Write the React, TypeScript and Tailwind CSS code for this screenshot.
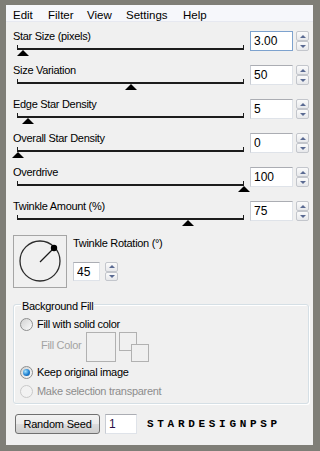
import clsx from "clsx";

const sliders = [
  { label: "Star Size (pixels)", value: "3.00", pos: 5, focused: true },
  { label: "Size Variation", value: "50", pos: 113 },
  { label: "Edge Star Density", value: "5", pos: 10 },
  { label: "Overall Star Density", value: "0", pos: 0 },
  { label: "Overdrive", value: "100", pos: 226 },
  { label: "Twinkle Amount (%)", value: "75", pos: 170 },
];

const menu = [
  { name: "Edit", w: "w-[35px]" },
  { name: "Filter", w: "w-[39px]" },
  { name: "View", w: "w-[39px]" },
  { name: "Settings", w: "w-[57px]" },
  { name: "Help", w: "w-[40px]" },
];

const label = "text-[11px] leading-[13px] tracking-[-0.3px] whitespace-nowrap";

function SpinBtn({ up }: { up?: boolean }) {
  return (
    <div className="flex flex-1 items-center justify-center rounded-[2px] border border-[#c3c6cc] bg-gradient-to-b from-[#fbfbfb] to-[#e7e8eb]">
      {up ? (
        <span className="h-0 w-0 border-x-[3px] border-b-[3px] border-x-transparent border-b-[#5a6a92]" />
      ) : (
        <span className="h-0 w-0 border-x-[3px] border-t-[3px] border-x-transparent border-t-[#5a6a92]" />
      )}
    </div>
  );
}

function Spinner({ className }: { className: string }) {
  return (
    <div className={clsx("flex w-[13px] flex-col", className)}>
      <SpinBtn up />
      <SpinBtn />
    </div>
  );
}

function Radio({ checked, disabled }: { checked?: boolean; disabled?: boolean }) {
  return (
    <span
      className={clsx(
        "flex h-[13px] w-[13px] shrink-0 items-center justify-center rounded-full border",
        disabled
          ? "border-[#c9c9c9] bg-[#f2f2f2]"
          : "border-[#8e8f8f] bg-gradient-to-br from-[#d2d2d2] to-[#fbfbfb]"
      )}
    >
      {checked && (
        <span className="h-[7px] w-[7px] rounded-full bg-[radial-gradient(circle_at_35%_35%,#a6e4ff,#1d7fd0_55%,#0b4c91)]" />
      )}
    </span>
  );
}

export default function App() {
  return (
    <div className="h-[451px] w-[320px] bg-[#7f7e77] pb-[6px] pl-[6px] pr-[7px] pt-[5px] font-['Liberation_Sans',Arial,sans-serif] text-black">
      <div className="flex h-full flex-col bg-[#f0f0f0]">
        {/* menu bar */}
        <div className="flex h-[17px] border-b border-[#e6e8f0] bg-[#f6f7fb] pl-[7px] pt-[3px] text-[11.5px] leading-[14px]">
          {menu.map((m) => (
            <span key={m.name} className={m.w}>
              {m.name}
            </span>
          ))}
        </div>

        {/* sliders */}
        <div className="mt-[8px] flex flex-col">
          {sliders.map((s) => (
            <div key={s.label} className="flex h-[34px]">
              <div className="w-[238px] pl-[7px]">
                <div className={clsx("h-[13px]", label)}>{s.label}</div>
                <div className="relative ml-[4px] mt-[2px] h-[5px] w-[227px] border-x border-b-2 border-[#1c1c1c]">
                  <span
                    className="absolute top-[5px] h-0 w-0 border-x-[6px] border-b-[6px] border-x-transparent border-b-black"
                    style={{ left: s.pos - 6 }}
                  />
                </div>
              </div>
              <input
                readOnly
                value={s.value}
                className={clsx(
                  "ml-[6px] mt-[1px] h-[20px] w-[43px] border bg-white px-[3px] text-[12px] leading-[18px] outline-none",
                  s.focused
                    ? "border-[#7da2ce]"
                    : "border-[#dfe3e9] border-t-[#abadb3] border-l-[#c8ccd3]"
                )}
              />
              <Spinner className="ml-[3px] mt-[1px] h-[20px]" />
            </div>
          ))}
        </div>

        {/* twinkle rotation */}
        <div className="mt-[1px] flex pl-[7px]">
          <div className="h-[53px] w-[54px] border border-[#a5a5a5]">
            <svg width="52" height="51" viewBox="0 0 52 51">
              <circle cx="26" cy="25" r="20" fill="none" stroke="#2b2b2b" strokeWidth="1.3" />
              <line x1="26" y1="26" x2="40" y2="12" stroke="#1a1a1a" strokeWidth="1.3" />
              <circle cx="40" cy="12" r="3.2" fill="#000" />
            </svg>
          </div>
          <div className="ml-[6px] pt-[2px]">
            <div className={label}>Twinkle Rotation (°)</div>
            <div className="mt-[12px] flex">
              <input
                readOnly
                value="45"
                className="h-[19px] w-[27px] border border-[#dfe3e9] border-l-[#c8ccd3] border-t-[#abadb3] bg-white px-[3px] text-[12px] leading-[17px] outline-none"
              />
              <Spinner className="ml-[5px] h-[19px]" />
            </div>
          </div>
        </div>

        {/* background fill group */}
        <div className="ml-[7px] mt-[16px] flex h-[100px] w-[296px] flex-col rounded-[3px] border border-[#d5dfe5] shadow-[inset_1px_1px_0_#fff,1px_1px_0_#fff]">
          <div className={clsx("-mt-[5px] ml-[7px] w-fit bg-[#f0f0f0] px-[1px]", label)}>
            Background Fill
          </div>

          <div className="mt-[4px] flex h-[14px] items-center pl-[6px]">
            <Radio />
            <span className={clsx("ml-[4px]", label)}>Fill with solid color</span>
          </div>

          <div className="mt-[1px] flex">
            <span className={clsx("ml-[27px] w-[45px] pt-[7px] text-[#a3a3a3]", label)}>Fill Color</span>
            <div className="h-[30px] w-[30px] border border-[#b1b1b1]" />
            <div className="relative ml-[3px] h-[30px] w-[30px]">
              <div className="absolute left-0 top-0 h-[19px] w-[18px] border border-[#b1b1b1]" />
              <div className="absolute left-[12px] top-[12px] h-[18px] w-[18px] border border-[#b1b1b1] bg-[#f0f0f0]" />
            </div>
          </div>

          <div className="mt-[3px] flex h-[14px] items-center pl-[6px]">
            <Radio checked />
            <span className={clsx("ml-[4px]", label)}>Keep original image</span>
          </div>

          <div className="mt-[5px] flex h-[14px] items-center pl-[6px]">
            <Radio disabled />
            <span className={clsx("ml-[4px] text-[#8d8d8d]", label)}>Make selection transparent</span>
          </div>
        </div>

        {/* bottom bar */}
        <div className="mt-[10px] flex items-center">
          <button className="ml-[9px] h-[20px] w-[85px] rounded-[3px] border border-[#707070] bg-[linear-gradient(#f3f3f3,#ebebeb_50%,#dddddd_50%,#cfcfcf)] text-[11px] leading-[18px] tracking-[-0.2px]">
            Random Seed
          </button>
          <input
            readOnly
            value="1"
            className="ml-[5px] h-[20px] w-[32px] border border-[#dfe3e9] border-l-[#c8ccd3] border-t-[#abadb3] bg-white px-[3px] text-[12px] leading-[18px] text-[#2a0f45] outline-none"
          />
          <span className="ml-[10px] font-['Liberation_Mono',monospace] text-[11px] font-bold leading-[14px] tracking-[3.7px]">
            STARDESIGNPSP
          </span>
        </div>
      </div>
    </div>
  );
}
